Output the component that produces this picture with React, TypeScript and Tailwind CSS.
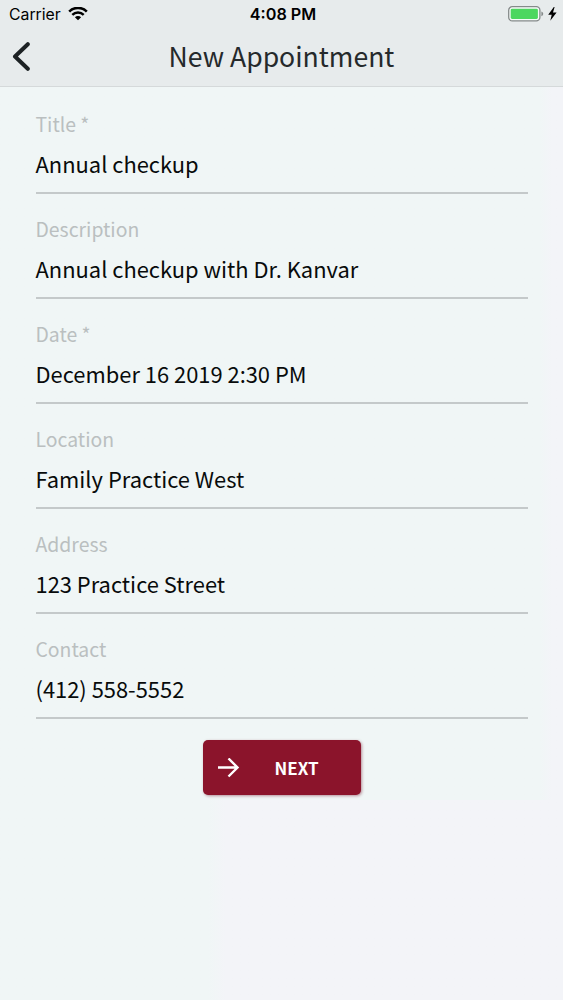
import React from "react";

type Field = { id: string; label: string; value: string };

const fields: Field[] = [
  { id: "title", label: "Title *", value: "Annual checkup" },
  { id: "description", label: "Description", value: "Annual checkup with Dr. Kanvar" },
  { id: "date", label: "Date *", value: "December 16 2019 2:30 PM" },
  { id: "location", label: "Location", value: "Family Practice West" },
  { id: "address", label: "Address", value: "123 Practice Street" },
  { id: "contact", label: "Contact", value: "(412) 558-5552" },
];

const WifiIcon = () => (
  <svg width="20" height="14" viewBox="0 0 20 14" fill="none" stroke="#000">
    <path d="M1.2 4.6a12.4 12.4 0 0 1 17.6 0" strokeWidth="2.6" />
    <path d="M4.3 7.8a8.1 8.1 0 0 1 11.4 0" strokeWidth="2.4" />
    <path d="M10 13.3 6.9 10.3a4.4 4.4 0 0 1 6.2 0Z" fill="#000" stroke="none" />
  </svg>
);

const BatteryIcon = () => (
  <svg width="36" height="16" viewBox="0 0 36 16" fill="none">
    <rect x="0.7" y="0.7" width="31.2" height="14.2" rx="3.6" fill="#f7fbf9" stroke="#858a8a" strokeWidth="1.3" />
    <rect x="2.7" y="2.7" width="27.2" height="10.2" rx="1.4" fill="#4cd75f" />
    <path d="M33.4 5.4c1.2.4 1.8 1.3 1.8 2.4s-.6 2-1.8 2.4Z" fill="#858a8a" />
  </svg>
);

const BoltIcon = () => (
  <svg width="9" height="14" viewBox="0 0 9 14" fill="#000">
    <path d="M5.8 0 .2 7.8h3.5L2.3 13.8 8.6 5.6H5L6.6 0Z" />
  </svg>
);

const StatusBar = () => (
  <div className="grid h-7 grid-cols-3 items-center pl-[9px] pr-[6px] font-[Inter,sans-serif] leading-6 text-black">
    <div className="flex items-center gap-[7px]">
      <span className="pt-[2px] text-[15.8px]">Carrier</span>
      <WifiIcon />
    </div>
    <span className="text-center text-[16.2px] font-semibold">4:08 PM</span>
    <div className="flex items-center justify-end gap-[4px]">
      <BatteryIcon />
      <BoltIcon />
    </div>
  </div>
);

const FieldRow: React.FC<{ field: Field }> = ({ field }) => (
  <div className="flex h-[105px] flex-col border-b-2 border-[#c4c9ca] pt-[15px]">
    <label htmlFor={field.id} className="h-10 text-[19.4px] leading-10 text-[#babfc0]">
      {field.label}
    </label>
    <span id={field.id} className="h-10 text-[21.9px] leading-10 text-[#080b0b]">
      {field.value}
    </span>
  </div>
);

export default function App() {
  return (
    <div className="flex h-[1000px] w-full flex-col bg-linear-to-r from-[#f0f6f6] from-96% to-[#f3f4f8] to-98% font-['Noto_Sans_CJK_SC',sans-serif]">
      <header className="h-[87px] border-b border-[#d5d9da] bg-[#e7ebec]">
        <StatusBar />
        <div className="grid h-[58px] grid-cols-[40px_1fr_40px] items-center">
          <button type="button" aria-label="Back" className="flex pb-px pl-[12px]">
            <svg width="19" height="29" viewBox="0 0 19 29" fill="none" stroke="#1d2224" strokeWidth="4" strokeLinecap="round" strokeLinejoin="round">
              <path d="M15.8 2.2 3 14.5l12.8 12.3" />
            </svg>
          </button>
          <h1 className="pb-[2px] text-center text-[26.6px] text-[#25292b]">New Appointment</h1>
        </div>
      </header>

      <main className="flex flex-col px-[35.5px]">
        <div className="-mt-px flex flex-col pt-[3px]">
          {fields.map((field) => (
            <FieldRow key={field.id} field={field} />
          ))}
        </div>
        <button
          type="button"
          className="mt-[21px] flex h-[55px] w-[158px] items-center self-center rounded-[5px] bg-[#8b142b] pl-[15px] text-white shadow-[1px_1px_3px_rgba(110,20,40,0.45)]"
        >
          <svg width="22" height="20" viewBox="0 0 22 20" fill="none" stroke="currentColor" strokeWidth="2.4">
            <path d="M0 9.5h19.5M10.5 0.5l9 9-9 9" />
          </svg>
          <span className="ml-[35px] text-[17px] font-bold">NEXT</span>
        </button>
      </main>
      <div className="mt-[5px] flex-1 bg-linear-to-r from-[#f0f6f6] from-37% to-[#f3f4f8] to-40%" />
    </div>
  );
}
